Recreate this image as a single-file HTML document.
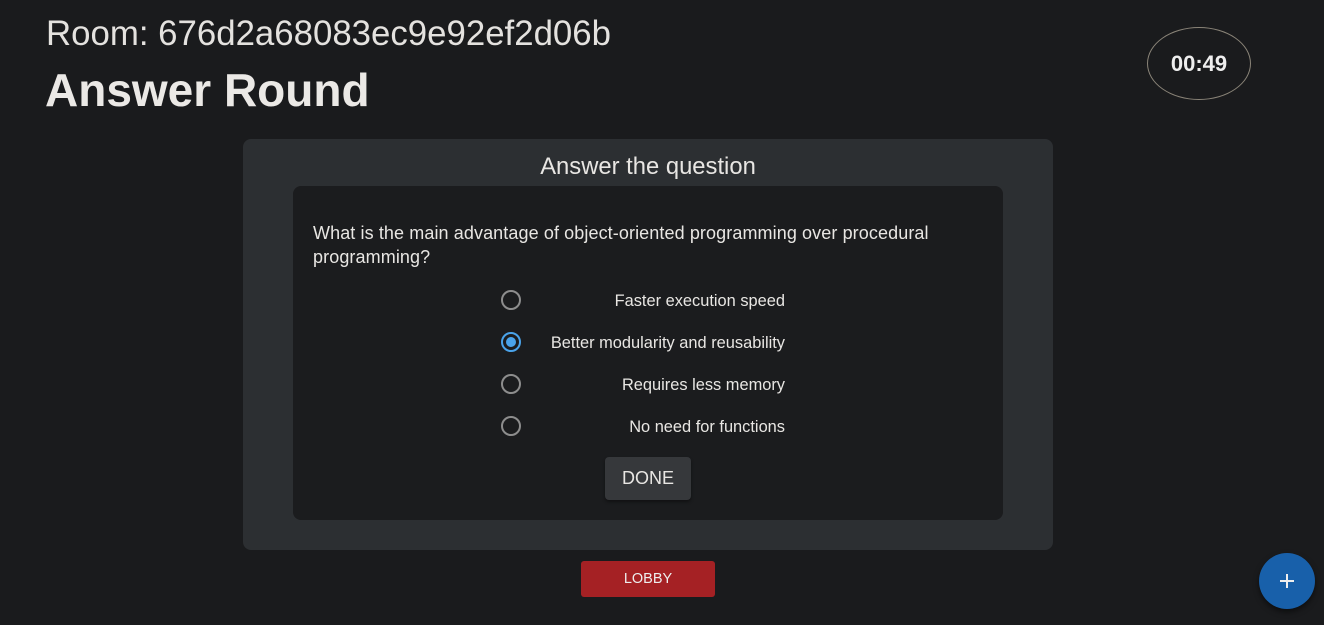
<!DOCTYPE html>
<html><head><meta charset="utf-8"><style>
*{margin:0;padding:0;box-sizing:border-box}
body{width:1324px;height:625px;background:#1a1b1d;color:#e8e6e3;font-family:"Liberation Sans",sans-serif;position:relative;overflow:hidden}
.room{position:absolute;left:46px;top:14px;font-size:34.8px;color:#e4e2df;white-space:nowrap}
.h1{position:absolute;left:45px;top:63px;font-size:46px;font-weight:bold;color:#ebe9e6;white-space:nowrap}
.timer{position:absolute;left:1147px;top:27px;width:104px;height:73px;border:1px solid #8a8478;border-radius:50%;display:flex;align-items:center;justify-content:center;font-weight:bold;font-size:22px;color:#eee}
.card{position:absolute;left:243px;top:139px;width:810px;height:411px;background:#2c2f32;border-radius:8px}
.ct{position:absolute;left:0;right:0;top:14px;text-align:center;font-size:23.8px;color:#e8e6e3}
.inner{position:absolute;left:50px;top:47px;width:710px;height:334px;background:#1b1c1e;border-radius:8px}
.q{position:absolute;left:20px;top:35px;font-size:18px;line-height:24px;letter-spacing:0.1px;white-space:nowrap;color:#e8e6e3}
.opt{position:absolute;left:208px;width:284px;height:20px;font-size:16.4px;color:#e8e6e3}
.opt .r{position:absolute;left:0;top:0;width:20px;height:20px;border:2px solid #8d8d8d;border-radius:50%}
.opt .r.on{border-color:#4aa3ea}
.opt .r.on::after{content:"";position:absolute;left:3px;top:3px;width:10px;height:10px;border-radius:50%;background:#4aa3ea}
.opt span{position:absolute;right:0;top:2px;white-space:nowrap}
.done{position:absolute;left:312px;top:271px;width:86px;height:43px;background:#36383b;border-radius:4px;font-size:18px;line-height:43px;text-align:center;color:#e8e6e3;box-shadow:0 2px 3px rgba(0,0,0,.4)}
.lobby{position:absolute;left:581px;top:561px;width:134px;height:36px;background:#a52124;border-radius:3px;font-size:14.5px;line-height:37px;text-align:center;color:#eee}
.fab{position:absolute;left:1259px;top:553px;width:56px;height:56px;border-radius:50%;background:#1860aa;box-shadow:0 3px 6px rgba(0,0,0,.5)}
.fab::before{content:"";position:absolute;left:21px;top:27px;width:14px;height:2px;background:#eee}
.fab::after{content:"";position:absolute;left:27px;top:21px;width:2px;height:14px;background:#eee}
</style></head><body>
<div class="room">Room: 676d2a68083ec9e92ef2d06b</div>
<div class="h1">Answer Round</div>
<div class="timer">00:49</div>
<div class="card">
<div class="ct">Answer the question</div>
<div class="inner">
<div class="q">What is the main advantage of object-oriented programming over procedural<br>programming?</div>
<div class="opt" style="top:104px"><div class="r"></div><span>Faster execution speed</span></div>
<div class="opt" style="top:146px"><div class="r on"></div><span>Better modularity and reusability</span></div>
<div class="opt" style="top:188px"><div class="r"></div><span>Requires less memory</span></div>
<div class="opt" style="top:230px"><div class="r"></div><span>No need for functions</span></div>
<div class="done">DONE</div>
</div>
</div>
<div class="lobby">LOBBY</div>
<div class="fab"></div>
</body></html>
